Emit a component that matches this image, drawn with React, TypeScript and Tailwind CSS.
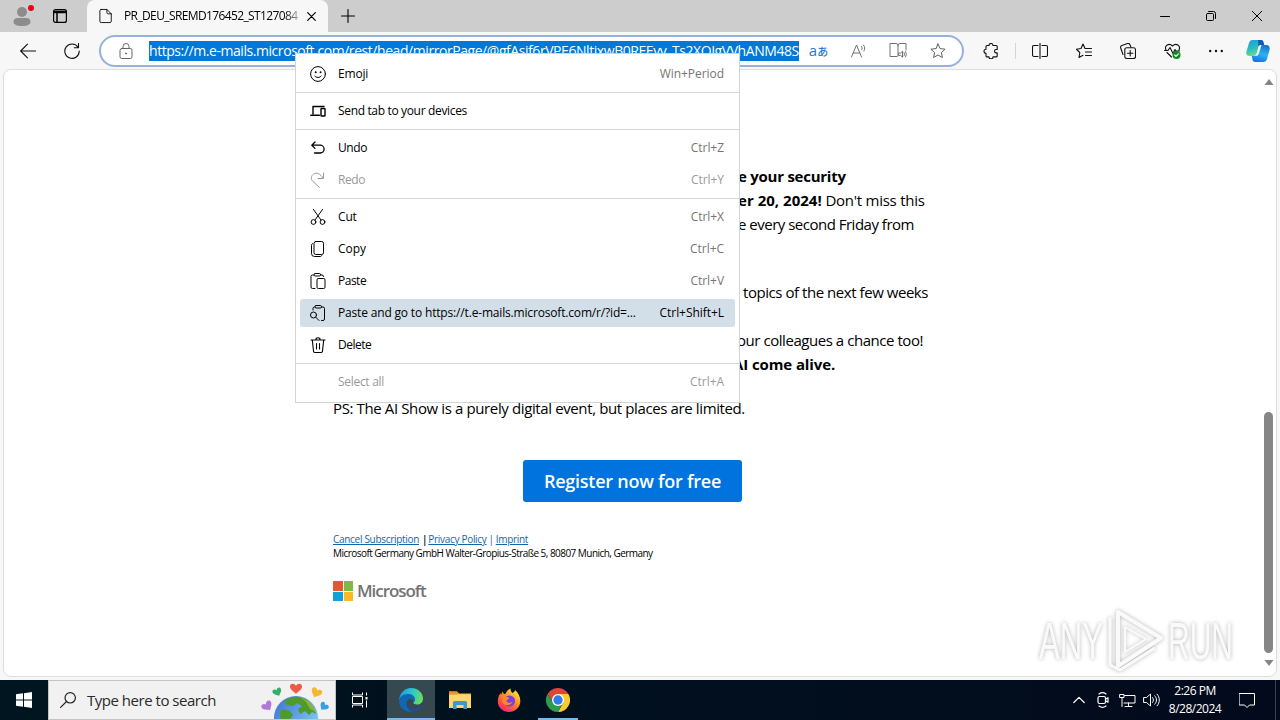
import React from 'react';

interface IconProps {
  children: React.ReactNode;
  className?: string;
  box?: number;
  sw?: number;
}

const Icon: React.FC<IconProps> = ({ children, className = 'w-4 h-4', box = 16, sw = 1 }) => (
  <svg
    viewBox={`0 0 ${box} ${box}`}
    className={`shrink-0 ${className}`}
    fill="none"
    stroke="currentColor"
    strokeWidth={sw}
    strokeLinecap="round"
    strokeLinejoin="round"
  >
    {children}
  </svg>
);

/* ---------- Title bar ---------- */

const TitleBar = () => (
  <div className="flex h-8 bg-[#cdcdcd] text-black">
    <div className="relative flex w-11 items-center justify-center">
      <svg viewBox="0 0 20 22" className="w-5 h-[22px]">
        <circle cx="10" cy="7" r="5" fill="#8c8c8c" />
        <path d="M1.500 17c0-2.500 1.500-4 4-4h9c2.500 0 4 1.500 4 4 0 2.500-3.500 4-8.500 4s-8.500-1.500-8.500-4z" fill="#8c8c8c" />
      </svg>
      <span className="absolute left-7 top-[5px] h-1.5 w-1.5 rounded-full bg-[#e30613]" />
    </div>
    <div className="flex w-[43px] items-center pl-[9px]">
      <Icon className="h-[14px] w-[14px]" box={14} sw={1.2}>
        <rect x="0.600" y="0.600" width="12.800" height="12.800" rx="2" />
        <path d="M1 2.500h12M1 3.500h12M4 4v9" strokeWidth="1.500" />
      </Icon>
    </div>
    <div className="flex w-[241px] items-center rounded-t-lg bg-[#f7f7f7] pl-3">
      <Icon className="w-[14px] h-[18px]" box={16}>
        <path d="M2.500 0.500h6.500l5 5v8.500a1.500 1.500 0 0 1-1.500 1.500h-10a1.500 1.500 0 0 1-1.500-1.500v-12a1.500 1.500 0 0 1 1.500-1.500zM9 0.500v3.500a1.500 1.500 0 0 0 1.500 1.500H14" />
      </Icon>
      <span className="ml-[11px] w-[175px] overflow-hidden whitespace-nowrap bg-gradient-to-r from-black from-90% to-[#bbb] bg-clip-text text-[12px] tracking-[-0.62px] text-transparent">
        PR_DEU_SREMD176452_ST127084
      </span>
      <Icon className="ml-2 w-[9px] h-[9px]" box={9} sw={1.2}>
        <path d="M0.700 0.700l7.600 7.600M8.300 0.700L0.700 8.300" />
      </Icon>
    </div>
    <div className="flex w-10 items-center justify-center">
      <Icon className="w-[14px] h-[14px]" box={14} sw={1.1}>
        <path d="M7 0.500v13M0.500 7h13" />
      </Icon>
    </div>
    <div className="ml-auto flex w-[138px]">
      <div className="flex w-[46px] items-center justify-center">
        <Icon className="w-[10px] h-[10px]" box={10}>
          <path d="M0.500 5.500h9" />
        </Icon>
      </div>
      <div className="flex w-[46px] items-center justify-center">
        <Icon className="w-[10px] h-[10px]" box={10}>
          <rect x="0.500" y="2.500" width="7" height="7" rx="1" />
          <path d="M2.500 0.500h5a2 2 0 0 1 2 2v5" />
        </Icon>
      </div>
      <div className="flex w-[46px] items-center justify-center">
        <Icon className="w-[10px] h-[10px]" box={10}>
          <path d="M0.300 0.300l9.400 9.400M9.700 0.300L0.300 9.700" />
        </Icon>
      </div>
    </div>
  </div>
);

/* ---------- Toolbar ---------- */

const STAR = 'M8 1l2.100 4.600 5 .6-3.700 3.400 1 4.900L8 12l-4.400 2.500 1-4.900L.9 6.200l5-.6z';

const Cell = ({ children, className = 'w-11' }: { children: React.ReactNode; className?: string }) => (
  <div className={`flex shrink-0 items-center justify-center ${className}`}>{children}</div>
);

const CopilotLogo = () => (
  <svg viewBox="0 0 24 22" className="h-[22px] w-6">
    <defs>
      <linearGradient id="cpA" x1="0" y1="0" x2="0.300" y2="1">
        <stop offset="0" stopColor="#1c9bdc" />
        <stop offset="0.600" stopColor="#2bbfc0" />
        <stop offset="1" stopColor="#6fd98a" />
      </linearGradient>
      <linearGradient id="cpB" x1="0.600" y1="0" x2="0.300" y2="1">
        <stop offset="0" stopColor="#1676cf" />
        <stop offset="0.500" stopColor="#2eb1f0" />
        <stop offset="1" stopColor="#1b6fe0" />
      </linearGradient>
    </defs>
    <path d="M6.500 0H15c1.500 0 2 .8 2.400 2l.8 3h-2.700c-2 0-2.700 1-3.200 2.700l-1.500 5c-.6 2-1.500 3.300-3.500 3.300H3.500C.8 16-.2 14 .5 11.500l2.500-8.500C3.600 1 4.700 0 6.500 0z" fill="url(#cpA)" />
    <path d="M12 0h3c1.500 0 2 .8 2.400 2l.8 3h-2.700c-1.500 0-2.500.7-3 2z" fill="#1259b5" />
    <path d="M17.500 22H9c-1.500 0-2-.8-2.400-2l-.8-4h2c2 0 3.200-1.300 3.700-3l1.500-5c.6-2 1.500-3 3.500-3h4c2.700 0 3.700 2.500 3 5L21 19c-.6 2-1.700 3-3.500 3z" fill="url(#cpB)" />
    <path d="M12.500 6.500c.5-1 1.300-1.500 2.500-1.500h.5l-2.500 8c-.5 1.700-1.500 3-3.500 3H8c1.500 0 2.500-1 3-2.500z" fill="#f7f7f7" />
  </svg>
);

const AddressBar = () => (
  <div className="flex h-8 w-[865px] shrink-0 items-center rounded-full border-2 border-[#97b1db] bg-white">
    <div className="flex w-12 justify-center pl-0.5 text-[#666]">
      <Icon className="w-4 h-4" box={16}>
        <rect x="2" y="5.500" width="12" height="10" rx="1.800" />
        <path d="M5 5.500V3.500a3 3 0 0 1 6 0v2" />
        <circle cx="8" cy="10.500" r="0.600" fill="currentColor" />
      </Icon>
    </div>
    <div className="h-5 w-[650px] overflow-hidden whitespace-nowrap bg-[#0078d7] text-[14px] leading-5 tracking-[-0.44px] text-white">
      https://m.e-mails.microsoft.com/rest/head/mirrorPage/@gfAsif6rVPE6NltjxwB0REEvv_Ts2XQIgVVhANM48S
    </div>
    <Cell className="w-[39px]">
      <span className="flex items-baseline text-[15px] leading-4 text-[#1f78d0]">
        a<span className="font-['Noto_Sans_CJK_JP',sans-serif] text-[11px] font-medium leading-4">あ</span>
      </span>
    </Cell>
    <Cell className="w-10 pl-0.5 text-[#707070]">
      <Icon>
        <path d="M0.500 14L5.500 2l5 12M2.300 10h6.400M10.500 3.500c.8 1 .8 2.200.2 3.200M12.500 2c1.500 1.800 1.600 4 .4 6" />
      </Icon>
    </Cell>
    <Cell className="w-10 text-[#707070]">
      <Icon className="h-[17px] w-[18px]" box={17}>
        <path d="M7.500 14.500H0.500V1.500h6a2 2 0 0 1 2 2V14M8.500 3.500a2 2 0 0 1 2-2H16.500V8" />
        <path d="M9.500 11h1.500l2-1.800v6l-2-1.800H9.500zM14.500 10.500c.7 1 .7 2.400 0 3.400M16 9.500c1 1.500 1 4 0 5.500" />
      </Icon>
    </Cell>
    <Cell className="w-10 text-[#606060]">
      <Icon>
        <path d={STAR} />
      </Icon>
    </Cell>
  </div>
);

const Toolbar = () => (
  <div className="flex h-[37px] items-center bg-[#f7f7f7] pl-1.5 text-[#111]">
    <Cell>
      <Icon sw={1.1}>
        <path d="M0.700 8h15M7.500 1.200L0.700 8l6.800 6.800" />
      </Icon>
    </Cell>
    <Cell>
      <Icon sw={1.1}>
        <path d="M14 4.200A7.200 7.200 0 1 0 15.200 8M14.500 0.500v4.200h-4.200" />
      </Icon>
    </Cell>
    <div className="w-[5px]" />
    <AddressBar />
    <div className="w-[5px]" />
    <Cell>
      <Icon sw={1.1}>
        <path d="M6 2.500a2 2 0 0 1 4 0h3.200a1 1 0 0 1 1 1V6.500h-1a1.700 1.700 0 0 0 0 3.400h1v3a1 1 0 0 1-1 1H10a2 2 0 0 1-4 0H4a1 1 0 0 1-1-1V10.200a2 2 0 0 1 0-4V3.500a1 1 0 0 1 1-1z" />
      </Icon>
    </Cell>
    <div className="ml-0.5 mr-0.5 h-4 w-px bg-[#d4d4d4]" />
    <Cell>
      <Icon className="h-4 w-4" sw={1.1}>
        <path d="M6 2.500H2A1.500 1.500 0 0 0 .5 4v8A1.500 1.500 0 0 0 2 13.500h4M10 2.500h4A1.500 1.500 0 0 1 15.500 4v8a1.500 1.500 0 0 1-1.500 1.500h-4M8 0.500v15" />
      </Icon>
    </Cell>
    <Cell>
      <Icon sw={1.1}>
        <path d="M9 5.500L7 1 5 5.500l-4.700.7 3.500 3.300-.8 5L7 12.300M9 5.500h6.500M9.500 9h6M9.500 12.500h6" />
      </Icon>
    </Cell>
    <Cell>
      <Icon sw={1.1}>
        <rect x="4.800" y="4.800" width="10.700" height="10.700" rx="2" />
        <path d="M10.200 7.500v5.400M7.500 10.200h5.400M3 11.500L.7 5a2 2 0 0 1 1.200-2.400L7.500.6A2 2 0 0 1 10 1.800l.8 2" />
      </Icon>
    </Cell>
    <Cell>
      <Icon className="w-[17px] h-4" sw={1.1}>
        <path d="M1.500 7C-.5 2.500 4.500-.5 8 3c3.500-3.500 8.500-.5 6.500 4M2.500 9.500L7 14M0 7.500h3.500L5.500 4.500l3 6 2-4 1 1.500H15" />
        <circle cx="12" cy="12" r="4" fill="#128a24" stroke="none" />
        <path d="M10.200 12l1.300 1.300 2.400-2.500" stroke="#fff" />
      </Icon>
    </Cell>
    <Cell>
      <Icon>
        <g fill="currentColor" stroke="none">
          <circle cx="2.200" cy="8" r="1.200" />
          <circle cx="8" cy="8" r="1.200" />
          <circle cx="13.800" cy="8" r="1.200" />
        </g>
      </Icon>
    </Cell>
    <Cell className="w-10">
      <CopilotLogo />
    </Cell>
  </div>
);

/* ---------- Mail page ---------- */

const MicrosoftLogo = () => (
  <div className="flex items-center">
    <div className="grid grid-cols-2 gap-px">
      <span className="h-[9.500px] w-[9.500px] bg-[#e8562e]" />
      <span className="h-[9.500px] w-[9.500px] bg-[#7fba42]" />
      <span className="h-[9.500px] w-[9.500px] bg-[#12a0d8]" />
      <span className="h-[9.500px] w-[9.500px] bg-[#fbb924]" />
    </div>
    <span className="ml-1 text-[17px] font-semibold leading-5 tracking-[-1.05px] text-[#737373]">Microsoft</span>
  </div>
);

const Scrollbar = () => (
  <div className="ml-auto flex w-[15px] flex-col items-center pt-[9px] pb-2.5">
    <svg viewBox="0 0 10 6" className="h-1.5 w-2.5" fill="#858585">
      <path d="M5 0l4.500 6h-9z" />
    </svg>
    <div className="mt-auto mb-[7px] h-[241px] w-[9px] rounded-full bg-[#868686]" />
    <svg viewBox="0 0 10 6" className="h-1.5 w-2.5" fill="#858585">
      <path d="M5 6L.5 0h9z" />
    </svg>
  </div>
);

const MailPage = () => (
  <div className="flex h-[611px] bg-[#f7f7f7] px-[3px] pb-[3px]">
    <div className="flex w-full rounded-lg border border-[#dedede] bg-white">
      <div className="pl-[329px] pt-[94px] text-[15px] leading-6 text-black">
        <div className="whitespace-nowrap pl-[405px]">
          <p className="font-bold tracking-[-0.25px]">e your security</p>
          <p className="tracking-[-0.25px]">
            <b className="tracking-[0.02px]">er 20, 2024!</b> Don't miss this
          </p>
          <p className="tracking-[-0.5px]">e every second Friday from</p>
          <p className="mt-11 pl-[5px] tracking-[-0.45px]">topics of the next few weeks</p>
          <p className="mt-6 -ml-px tracking-[-0.45px]">our colleagues a chance too!</p>
          <p className="-ml-[5px] font-bold tracking-[-0.1px]">AI come alive.</p>
        </div>
        <p className="mt-5 whitespace-nowrap tracking-[-0.38px]">
          PS: The AI Show is a purely digital event, but places are limited.
        </p>
        <button className="ml-[190px] mt-10 block h-[42px] w-[219px] rounded-[3px] bg-[#0073de] text-[18px] font-semibold tracking-[-0.25px] text-white">
          Register now for free
        </button>
        <div className="mt-[30px] whitespace-nowrap text-[10px] leading-[14px] tracking-[-0.3px]">
          <span className="text-[#1465a8] underline">Cancel Subscription</span>
          <span className="ml-[3px] mr-px font-semibold">|</span>
          <span className="text-[#1465a8] underline">Privacy Policy</span>
          <span className="mx-[2px] text-[#1465a8]">|</span>
          <span className="text-[#1465a8] underline">Imprint</span>
          <p className="tracking-[-0.54px]">Microsoft Germany GmbH Walter-Gropius-Straße 5, 80807 Munich, Germany</p>
        </div>
        <div className="mt-[21px]">
          <MicrosoftLogo />
        </div>
      </div>
      <Scrollbar />
    </div>
  </div>
);

/* ---------- Context menu ---------- */

interface MenuEntry {
  label: string;
  shortcut?: string;
  icon?: React.ReactNode;
  disabled?: boolean;
  active?: boolean;
  sepAfter?: boolean;
  tracking?: string;
}

const MENU: MenuEntry[] = [
  {
    label: 'Emoji',
    shortcut: 'Win+Period',
    sepAfter: true,
    icon: (
      <>
        <circle cx="8" cy="8" r="7.400" />
        <path d="M4.800 10c1.500 2 4.900 2 6.400 0" />
        <circle cx="5.600" cy="6.200" r="0.500" fill="currentColor" />
        <circle cx="10.400" cy="6.200" r="0.500" fill="currentColor" />
      </>
    ),
  },
  {
    label: 'Send tab to your devices',
    sepAfter: true,
    tracking: 'tracking-[-0.34px]',
    icon: (
      <>
        <path d="M14 3.500H3V11" strokeWidth="1.400" />
        <path d="M0.800 12.200h8.500" strokeWidth="1.500" />
        <rect x="11" y="5.500" width="4" height="7.500" rx="0.500" strokeWidth="1.400" />
      </>
    ),
  },
  {
    label: 'Undo',
    shortcut: 'Ctrl+Z',
    tracking: 'tracking-[-0.4px]',
    icon: <path d="M5 2L1.800 5.200 5 8.400M2 5.200h8.200a3.900 3.900 0 0 1 0 7.800H4.500" strokeWidth="1.300" />,
  },
  {
    label: 'Redo',
    shortcut: 'Ctrl+Y',
    disabled: true,
    sepAfter: true,
    tracking: 'tracking-[-0.4px]',
    icon: <path d="M13.500 1v5.500H8M13 6C10.500 2 6.500-.5 3 2.500.5 5 1 7.500 3 9.500l6.500 6" />,
  },
  {
    label: 'Cut',
    shortcut: 'Ctrl+X',
    icon: (
      <>
        <circle cx="3.500" cy="13" r="2.400" />
        <circle cx="12.500" cy="13" r="2.400" />
        <path d="M3.500 0.500L11 11M12.500 0.500L5 11" />
      </>
    ),
  },
  {
    label: 'Copy',
    shortcut: 'Ctrl+C',
    tracking: 'tracking-[0px]',
    icon: (
      <>
        <rect x="4" y="0.500" width="9.500" height="13" rx="1.800" />
        <path d="M2.500 2.500c-.6.400-1 1-1 1.800v8.200a3 3 0 0 0 3 3h5.500c.8 0 1.500-.4 1.800-1" />
      </>
    ),
  },
  {
    label: 'Paste',
    shortcut: 'Ctrl+V',
    tracking: 'tracking-[-0.5px]',
    icon: (
      <>
        <rect x="7" y="5.500" width="8" height="10" rx="1.300" />
        <path d="M4 2H2.500A1.500 1.500 0 0 0 1 3.500v10.500A1.500 1.500 0 0 0 2.500 15.500H5M10.500 2H12A1.500 1.500 0 0 1 13.500 3.500" />
        <rect x="4" y="0.500" width="6.500" height="2.500" rx="1.200" />
      </>
    ),
  },
  {
    label: 'Paste and go to https://t.e-mails.microsoft.com/r/?id=...',
    shortcut: 'Ctrl+Shift+L',
    active: true,
    icon: (
      <>
        <circle cx="3.500" cy="10" r="3" />
        <path d="M5.700 12.200L9 15.500M5 2H4.500A1.500 1.500 0 0 0 3 3.500V5M11.500 2H13A1.500 1.500 0 0 1 14.500 3.500v10.500a1.500 1.500 0 0 1-1.500 1.500h-1.500" />
        <rect x="5" y="0.500" width="6.500" height="2.500" rx="1.200" />
      </>
    ),
  },
  {
    label: 'Delete',
    sepAfter: true,
    tracking: 'tracking-[-0.5px]',
    icon: <path d="M1 3h14M5.800 3a2.200 2.200 0 0 1 4.400 0M2.300 3l1.200 11a1.500 1.500 0 0 0 1.500 1.500h6a1.500 1.500 0 0 0 1.500-1.500l1.200-11M6.500 6.500v5.500M9.500 6.500v5.500" strokeWidth="1.100" />,
  },
  { label: 'Select all', shortcut: 'Ctrl+A', disabled: true, tracking: 'tracking-[-0.3px]' },
];

const ContextMenu = () => (
  <div className="absolute left-[295px] top-[53px] w-[445px] border border-[#d2d5d8] bg-white py-1 text-[12px]">
    {MENU.map((m) => (
      <React.Fragment key={m.label}>
        <div className="h-8 px-1 py-0.5">
          <div
            className={`flex h-7 items-center rounded-[3px] pl-2.5 pr-[11px] ${m.active ? 'bg-[#d3dfe8]' : ''} ${
              m.disabled ? 'text-[#9a9a9a]' : 'text-black'
            }`}
          >
            <Icon>{m.icon}</Icon>
            <span className={`ml-3 whitespace-nowrap ${m.tracking ?? 'tracking-[-0.17px]'}`}>{m.label}</span>
            <span
              className={`ml-auto whitespace-nowrap tracking-[-0.05px] ${m.active || m.disabled ? '' : 'text-[#757575]'}`}
            >
              {m.shortcut}
            </span>
          </div>
        </div>
        {m.sepAfter && <div className="my-0.5 h-px bg-[#d6d6d6]" />}
      </React.Fragment>
    ))}
  </div>
);

/* ---------- Watermark ---------- */

const Watermark = () => (
  <svg
    viewBox="0 0 200 64"
    className="absolute left-[1036px] top-[608px] h-16 w-[200px] overflow-visible drop-shadow-[0_0_2px_rgba(0,0,0,0.3)]"
    fill="#fafafa"
  >
    <g fontFamily="Liberation Sans" fontSize="52">
      <text x="3" y="51" textLength="64" lengthAdjust="spacingAndGlyphs">ANY</text>
      <text x="132" y="51" textLength="65" lengthAdjust="spacingAndGlyphs">RUN</text>
    </g>
    <g fill="none" stroke="#fafafa" strokeWidth="4" strokeLinejoin="round">
      <path d="M82 4l43 26-43 28z" />
      <path d="M89 19l21 12-21 13z" strokeWidth="2" />
      <path d="M74 9v48l10 5 35-22" strokeWidth="3" />
    </g>
  </svg>
);

/* ---------- Taskbar ---------- */

const HEART = 'M0 2C-1.500-1.500-6.500-1-6 3c.3 3 4 4.500 6 7 2-2.500 5.700-4 6-7 .5-4-4.500-4.500-6-1z';

const Earth = () => (
  <svg viewBox="0 0 72 38" className="ml-auto mr-[3px] h-[38px] w-[72px]">
    <defs>
      <linearGradient id="sea" x1="0" y1="0" x2="1" y2="0.600">
        <stop offset="0" stopColor="#3d6fd6" />
        <stop offset="1" stopColor="#7cc7f0" />
      </linearGradient>
    </defs>
    <circle cx="36" cy="37" r="22" fill="url(#sea)" />
    <path d="M24 21c4-4 9-6 15-5l7 2 7 8 3 7-4-2-3 3-4-4-5 3-2-5 4-3-5-3-4 3-6-1zM22 28l8 2 3 4-3 4H21c-2-3-1-7 1-10z" fill="#4e9a2c" />
    <path d="M40 16l10 5 6 10-6-3-4-7z" fill="#8bb52c" />
    <path d={HEART} transform="translate(36 3)" fill="#ee5b43" />
    <path d={HEART} transform="translate(58 8) rotate(25) scale(.9)" fill="#f8b62c" />
    <path d={HEART} transform="translate(16 8) rotate(-25) scale(.75)" fill="#32b06a" />
    <path d={HEART} transform="translate(5 22) rotate(-35) scale(.9)" fill="#b078d8" />
    <path d={HEART} transform="translate(66 23) rotate(40) scale(.75)" fill="#35a0e8" />
  </svg>
);

const EdgeLogo = () => (
  <svg viewBox="0 0 24 24" className="h-6 w-6">
    <defs>
      <linearGradient id="edA" x1="0" y1="0.300" x2="1" y2="0.500">
        <stop offset="0" stopColor="#1e9be0" />
        <stop offset="0.500" stopColor="#2cc3d2" />
        <stop offset="1" stopColor="#6be05a" />
      </linearGradient>
    </defs>
    <path d="M0.200 12C.5 5 5.500 0 12 0c7 0 12 5 12 10.500 0 4-3 6-6 6-2.500 0-4-1-3.500-2 1.500-2 .5-6-4-6C5 8.500 2 10 .2 12z" fill="url(#edA)" />
    <path d="M0.200 12C1 8 5 6 9.500 6c4 0 6.500 2.500 6.500 5.500 0 1.500-.8 2.200-1.500 3 0-3-1.800-4-4-3.500C6 12 6 20 13.500 23.900 6 25-.5 19.500.2 12z" fill="#1267b4" />
    <path d="M8 14c0 5 5 8 9 6.500 2-.5 4-1.800 5-3 .5-.4 1 0 .7.600C21 21.500 17.500 24 13.500 24 10 22.500 7.500 18.500 8 14z" fill="#1b4f9c" />
  </svg>
);

const FolderLogo = () => (
  <svg viewBox="0 0 22 20" className="h-5 w-[22px]">
    <path d="M0 1.500h8l2 2h12V18H0z" fill="#f5b93a" />
    <path d="M0 4.500h22V18H0z" fill="#fbd86e" />
    <path d="M0 1.500h8l1.500 2L8 4.500H0z" fill="#e6952a" />
    <path d="M4 19v-6.500a1.500 1.500 0 0 1 1.500-1.500h11a1.500 1.500 0 0 1 1.500 1.500V19h-3.500v-4h-7v4z" fill="#4096d2" />
  </svg>
);

const FirefoxLogo = () => (
  <svg viewBox="0 0 24 24" className="h-6 w-6">
    <defs>
      <linearGradient id="ff" x1="0.850" y1="0" x2="0.200" y2="1">
        <stop offset="0" stopColor="#fff04a" />
        <stop offset="0.400" stopColor="#ff9a22" />
        <stop offset="0.750" stopColor="#ff4a4a" />
        <stop offset="1" stopColor="#e8207c" />
      </linearGradient>
    </defs>
    <path d="M13.500.5c0 2 .5 3 2 4.500C18 3.500 18 2.500 18 2c3.500 3 5.500 7 5.300 11.500C23 19.500 18 24 12 24S.8 19.500.8 13.500C.8 10 2 7 3.500 5L4 7l1.500-3.500L7 6l1.500-.3C9.500 3.500 11 1.500 13.500.5z" fill="url(#ff)" />
    <circle cx="12.500" cy="13" r="5.600" fill="#7a3fe0" />
    <path d="M5.500 9c3-1 5.500 0 7 1.500-1 .8-3 1-3 2.500 0 2 4 2.500 6 .5-1 4-7 5-10 1z" fill="#ff8a26" />
  </svg>
);

const ChromeLogo = () => (
  <svg viewBox="0 0 24 24" className="h-6 w-6">
    <path d="M12 6h10.400A12 12 0 0 1 12 24l5-9z" fill="#fbca2e" />
    <path d="M1.600 6l5.500 9 4.900-9h10.400A12 12 0 0 0 1.600 6z" fill="#dc4636" />
    <path d="M1.600 6l5.500 9h9.500L12 24A12 12 0 0 1 1.600 6z" fill="#2c9c4d" />
    <circle cx="12" cy="12" r="6" fill="#fff" />
    <circle cx="12" cy="12" r="4.700" fill="#2f7de8" />
  </svg>
);

const Taskbar = () => (
  <div className="flex h-10 bg-gradient-to-r from-[#00151f] to-[#020a1c] text-white">
    <Cell className="w-12">
      <svg viewBox="0 0 16 16" className="h-4 w-4" fill="#fff">
        <path d="M0 2.300l7-1v6.200H0zM8 1.200L16 0v7.500H8zM0 8.500h7v6.200l-7-1zM8 8.500h8V16l-8-1.200z" />
      </svg>
    </Cell>
    <div className="flex w-[288px] items-center border border-[#c4c4c4] bg-[#f1f1f1] pl-[11px]">
      <Icon className="h-4 w-4 text-[#222]" sw={1.2}>
        <circle cx="10.200" cy="5.800" r="5.200" />
        <path d="M6.500 9.500L0.600 15.400" />
      </Icon>
      <span className="ml-[11px] whitespace-nowrap text-[15px] tracking-[-0.48px] text-[#2b2b2b]">Type here to search</span>
      <Earth />
    </div>
    <Cell className="w-[51px] pr-[3px]">
      <Icon className="h-4 w-4">
        <path d="M0.500 0.500v2.500h10V0.500M0.500 4.500h10v7h-10zM0.500 15.500V13h10v2.500M14.500 0.500v3M14.500 8.500v7" strokeLinecap="butt" />
        <rect x="13.500" y="5" width="2" height="2.500" fill="currentColor" stroke="none" />
      </Icon>
    </Cell>
    <Cell className="w-12 border-b-2 border-[#76b9ed] bg-[#374950] pt-0.5">
      <EdgeLogo />
    </Cell>
    <Cell className="w-[50px]">
      <FolderLogo />
    </Cell>
    <Cell className="w-12">
      <FirefoxLogo />
    </Cell>
    <div className="flex w-[49px] items-stretch justify-center px-[4.5px]">
      <Cell className="w-10 border-b-2 border-[#76b9ed] pt-0.5">
        <ChromeLogo />
      </Cell>
    </div>

    <div className="ml-auto flex items-center">
      <Cell className="w-6">
        <Icon className="h-3 w-3" box={12} sw={1.2}>
          <path d="M0.800 8.500L6 3.300l5.200 5.200" />
        </Icon>
      </Cell>
      <Cell className="w-6">
        <Icon sw={1.2}>
          <rect x="3" y="4.500" width="7.500" height="7" rx="1.500" />
          <path d="M10.500 7.200l2.500-1.500v4.600l-2.500-1.500M4 2c2-1.500 5-1.500 7 0M4 14c2 1.500 5 1.500 7 0" />
        </Icon>
      </Cell>
      <Cell className="w-6">
        <Icon className="h-4 w-[17px]">
          <path d="M5 3.500h10.500v7.500H4.500M9 11v3.500M5.500 14.500h7M0.500 2.500h4v3h-4zM2.500 5.500v9" />
        </Icon>
      </Cell>
      <Cell className="w-6">
        <Icon className="h-4 w-[17px]">
          <path d="M0.500 5.500h2.500l4-3.500v12l-4-3.500H0.500zM9 5.500c1.300 1.500 1.300 3.500 0 5M11.300 3.800c2.300 2.500 2.300 5.900 0 8.400M13.600 2.200c3 3.300 3 8.300 0 11.600" />
        </Icon>
      </Cell>
      <div className="w-16 whitespace-nowrap text-center text-[12px] leading-[18px] tracking-[-0.5px]">
        <div>2:26 PM</div>
        <div>8/28/2024</div>
      </div>
      <Cell className="w-10">
        <Icon className="h-4 w-4">
          <path d="M0.500 1.500h15v11.500h-5l-2.500 2.500L5.500 13h-5z" />
        </Icon>
      </Cell>
      <div className="ml-2 mr-1 h-10 w-px bg-[#3a4350]" />
    </div>
  </div>
);

export default function App() {
  return (
    <div className="relative h-[720px] w-[1280px] overflow-hidden font-['Open_Sans','Noto_Sans',sans-serif]">
      <TitleBar />
      <Toolbar />
      <MailPage />
      <Taskbar />
      <ContextMenu />
      <Watermark />
    </div>
  );
}
